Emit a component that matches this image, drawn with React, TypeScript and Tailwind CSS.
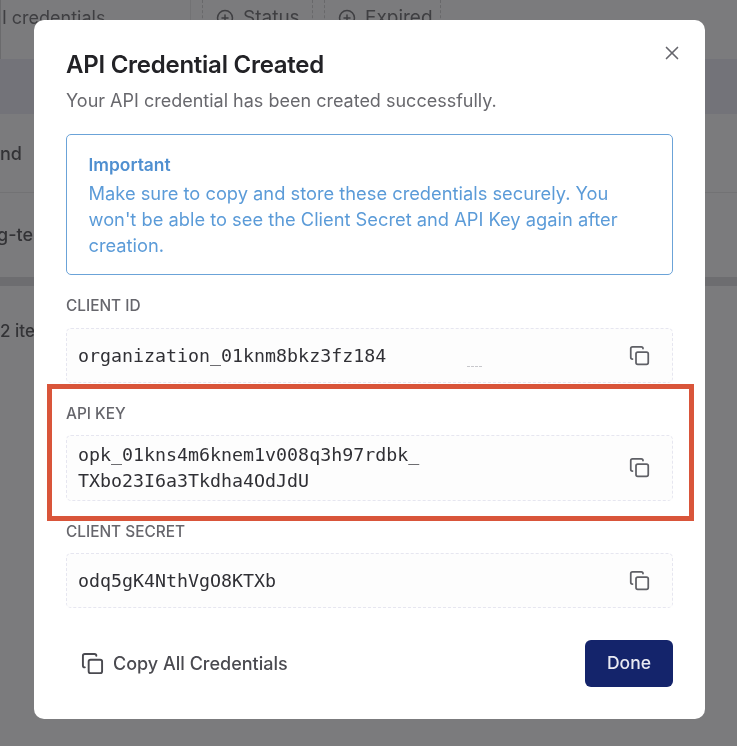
import { X, Copy, CirclePlus } from "lucide-react";

const sans = "font-['Inter','Liberation_Sans',sans-serif]";
const mono = "font-['DejaVu_Sans_Mono','Liberation_Mono',monospace]";

function Field({ label, lines, height, labelGap }: { label: string; lines: string[]; height: string; labelGap: string }) {
  return (
    <div>
      <div className={`text-[15.4px] leading-[17px] font-medium text-[#66666c] ${labelGap}`}>{label}</div>
      <div className={`flex items-center justify-between rounded-[5px] border border-dashed border-[#e6e6f0] bg-[#fdfdfd] pl-[11px] pr-[22px] ${height}`}>
        <div className={`${mono} text-[18.3px] leading-[26px] text-[#303035]`}>
          {lines.map((l) => (
            <div key={l}>{l}</div>
          ))}
        </div>
        <Copy className="mb-[1px] h-[21px] w-[21px] text-[#5f6066]" strokeWidth={2} />
      </div>
    </div>
  );
}

export default function App() {
  return (
    <div className={`relative h-[746px] w-[737px] overflow-hidden bg-[#7b7b7d] blur-[0.4px] ${sans}`}>
      <div className="flex h-[59px] items-start border-l border-[#6a6a6c] text-[19px] leading-[24px] text-[#3f3f42]">
        <div className="h-[59px] w-[190px] overflow-hidden whitespace-nowrap border-r border-[#727274] pt-[6px]">
          <span className="-ml-[23px] inline-block text-[18px]">API credentials</span>
        </div>
        <div className="ml-[11px] flex h-[59px] w-[111px] items-start gap-[9px] border-x border-dashed border-[#68686a] pl-[13px] pt-[6px]">
          <CirclePlus className="mt-[3px] h-[18px] w-[18px]" />
          <span>Status</span>
        </div>
        <div className="ml-[11px] flex h-[59px] w-[117px] items-start gap-[9px] border-x border-dashed border-[#68686a] pl-[13px] pt-[6px]">
          <CirclePlus className="mt-[3px] h-[18px] w-[18px]" />
          <span>Expired</span>
        </div>
      </div>
      <div className="h-[55px] bg-[#737379]" />
      <div className="flex h-[79px] items-center border-b border-[#727274] text-[18px] font-medium text-[#333336]">
        <span>nd</span>
      </div>
      <div className="flex h-[84px] items-center text-[18px] font-medium text-[#333336] whitespace-nowrap">
        <span className="-ml-[3px] pb-[2px]">g-test</span>
      </div>
      <div className="h-[9px] bg-[#6d6d70]" />
      <div className="pt-[33px] text-[17px] font-medium text-[#333336] whitespace-nowrap">2 items</div>

      <div className="absolute left-[34px] top-[20px] flex h-[699px] w-[671px] flex-col rounded-[10px] bg-white px-[32px] pt-[30px]">
        <button className="absolute right-[22px] top-[22px] text-[#66666c]">
          <X className="h-[22px] w-[22px]" strokeWidth={1.8} />
        </button>
        <h2 className="text-[24px] leading-[30px] font-semibold tracking-[-0.25px] text-[#222226]">API Credential Created</h2>
        <p className="mt-[7px] text-[18px] leading-[28px] text-[#68686d]">Your API credential has been created successfully.</p>
        <div className="mt-[19px] h-[141px] rounded-[5px] border-[1.5px] border-[#6ba3d8] pl-[21.5px] pr-[20px] pt-[15px] text-[18.3px] leading-[26px] text-[#5b9bd8]">
          <div className="text-[17.4px] font-semibold leading-[30px] text-[#4f8fd0]">Important</div>
          <div>Make sure to copy and store these credentials securely. You won't be able to see the Client Secret and API Key again after creation.</div>
        </div>
        <div className="mt-[22px]">
          <Field label="CLIENT ID" lines={["organization_01knm8bkz3fz184"]} height="h-[55px]" labelGap="mb-[14px]" />
        </div>
        <div className="mt-[22px]">
          <Field label="API KEY" lines={["opk_01kns4m6knem1v008q3h97rdbk_", "TXbo23I6a3Tkdha4OdJdU"]} height="h-[66px]" labelGap="mb-[13px]" />
        </div>
        <div className="mt-[22px]">
          <Field label="CLIENT SECRET" lines={["odq5gK4NthVgO8KTXb"]} height="h-[55px]" labelGap="mb-[13px]" />
        </div>
        <div className="mt-[32px] flex items-center justify-between">
          <button className="ml-[15px] flex items-center gap-[9px] text-[18px] font-medium text-[#4a4a50]">
            <Copy className="h-[23px] w-[23px]" strokeWidth={2} />
            Copy All Credentials
          </button>
          <button className="h-[47px] w-[88px] rounded-[6px] bg-[#14246b] text-[17.5px] font-medium text-[#e8e9f2]">Done</button>
        </div>
      </div>
      <div className="absolute left-[467px] top-[366px] w-[15px] border-t border-dashed border-[#c8c8cc]" />
      <div className="absolute left-[47px] top-[384px] h-[137px] w-[647px] border-[5px] border-[#d9553a]" />
    </div>
  );
}
